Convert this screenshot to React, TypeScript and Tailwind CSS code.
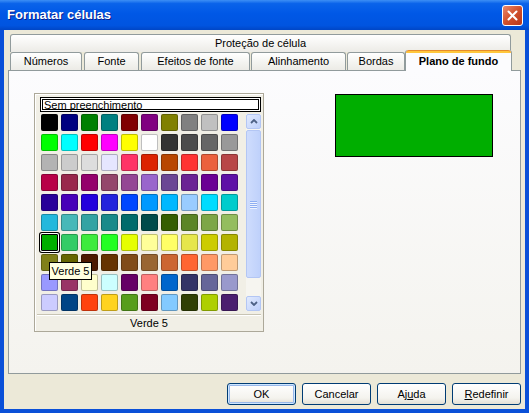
import React from 'react';

// Paleta padrão (10 x 10)
const palette: string[][] = [
  ['#000000', '#000080', '#008000', '#008080', '#800000', '#800080', '#808000', '#808080', '#c0c0c0', '#0000ff'],
  ['#00ff00', '#00ffff', '#ff0000', '#ff00ff', '#ffff00', '#ffffff', '#333333', '#4c4c4c', '#666666', '#999999'],
  ['#b3b3b3', '#cccccc', '#dddddd', '#e6e6ff', '#ff3366', '#dc2300', '#b84700', '#ff3333', '#eb613d', '#b84747'],
  ['#b80047', '#99284c', '#94006b', '#94476b', '#944794', '#9966cc', '#6b4794', '#6b2394', '#6b0094', '#5e11a6'],
  ['#280099', '#4700b8', '#2300dc', '#2323dc', '#0047ff', '#0099ff', '#00b8ff', '#99ccff', '#00dcff', '#00cccc'],
  ['#23b8dc', '#47b8b8', '#33a3a3', '#198a8a', '#006b6b', '#004a4a', '#355e00', '#5c8526', '#7da647', '#94bd5e'],
  ['#00ae00', '#33cc66', '#3deb3d', '#23ff23', '#e6ff00', '#ffff99', '#ffff66', '#e6e64c', '#cccc00', '#b3b300'],
  ['#808019', '#666600', '#4c1900', '#663300', '#804c19', '#996633', '#cc6633', '#ff6633', '#ff9966', '#ffcc99'],
  ['#9999ff', '#993366', '#ffffcc', '#ccffff', '#660066', '#ff8080', '#0066cc', '#333366', '#666699', '#9999cc'],
  ['#ccccff', '#004586', '#ff420e', '#ffd320', '#579d1c', '#7e0021', '#83caff', '#314004', '#aecf00', '#4b1f6f'],
];

const tabs = [
  { label: 'Números', cls: 'w-[72px]' },
  { label: 'Fonte', cls: 'w-[55px] ml-[2px]' },
  { label: 'Efeitos de fonte', cls: 'w-[109px] ml-[2px]' },
  { label: 'Alinhamento', cls: 'w-[95px] ml-[1px]' },
  { label: 'Bordas', cls: 'w-[58px] ml-[1px]' },
];

const tabBase =
  'flex h-[18px] items-center justify-center rounded-t-[3px] border-x border-t border-[#919b9c] bg-[linear-gradient(to_bottom,#ffffff,#f3f3ef_60%,#ecebe6)]';

function Chevron({ down }: { down?: boolean }) {
  return (
    <svg width="8" height="5" viewBox="0 0 8 5">
      <polyline
        points={down ? '1,1 4,4 7,1' : '1,4 4,1 7,4'}
        fill="none"
        stroke="#4d6185"
        strokeWidth="1.8"
      />
    </svg>
  );
}

function ScrollButton({ down }: { down?: boolean }) {
  return (
    <div className="flex h-[15px] w-[15px] items-center justify-center rounded-[2px] border border-[#b3c6f4] bg-[linear-gradient(to_bottom_right,#e1eafe,#bed0fb)]">
      <Chevron down={down} />
    </div>
  );
}

function ScrollBar() {
  return (
    <div className="ml-[8px] flex h-[197px] w-[15px] flex-col bg-[#f6f5f0]">
      <ScrollButton />
      <div className="mt-px flex h-[148px] flex-col items-center justify-center gap-[1px] rounded-[2px] border border-[#b3c6f4] bg-[linear-gradient(to_right,#cedcfd,#bfd1fb)]">
        {[0, 1, 2, 3].map((i) => (
          <div key={i} className="h-px w-[7px] bg-[#8eaef2] shadow-[0_1px_0_#eef3fe]" />
        ))}
      </div>
      <div className="flex-1" />
      <ScrollButton down />
    </div>
  );
}

function ColorFrame() {
  return (
    <div className="relative flex h-[239px] w-[230px] flex-col border border-[#aca899] bg-[#f1efe6] pt-[3px] shadow-[inset_1px_1px_0_#ffffff]">
      <div className="ml-[5px] h-[15px] w-[221px] border border-black bg-white p-px">
        <div className="h-full border border-black bg-white pl-[1px] text-[11px] leading-[10px] text-black">
          Sem preenchimento
        </div>
      </div>

      <div className="mt-[2px] flex pl-[6px]">
        <div className="grid h-[197px] w-[197px] grid-cols-10 gap-[3px]">
          {palette.flat().map((c, i) => (
            <div
              key={i}
              className={
                i === 60
                  ? 'h-[17px] w-[17px] rounded-[1px] border border-black shadow-[0_0_0_1px_#ffffff,0_0_0_2px_#000000]'
                  : 'h-[17px] w-[17px] rounded-[2px] border border-black/25'
              }
              style={{ backgroundColor: c }}
            />
          ))}
        </div>
        <ScrollBar />
      </div>

      <div className="mx-[2px] mt-[3px] h-[2px] border-t border-[#c8c4b4] border-b border-b-white" />
      <div className="flex h-[15px] items-center justify-center text-[11px] text-black">Verde 5</div>

      <div className="absolute left-[14px] top-[168px] flex h-[18px] w-[43px] items-center justify-center border border-black bg-[#ffffe1] text-[11px] text-black">
        Verde 5
      </div>
    </div>
  );
}

function XPButton({ children, isDefault }: { children: React.ReactNode; isDefault?: boolean }) {
  return (
    <button
      className={
        'flex h-[22px] w-[69px] items-center justify-center rounded-[3px] border border-[#003c74] bg-[linear-gradient(to_bottom,#ffffff,#f4f3ee_70%,#e3e0d5)] text-[11px] text-black ' +
        (isDefault ? 'shadow-[inset_0_0_0_1px_#cee7ff,inset_0_0_0_2px_#98b8ea]' : '')
      }
    >
      {children}
    </button>
  );
}

export default function App() {
  return (
    <div className="flex h-[413px] w-[529px] flex-col bg-[#0a50d8] font-['Liberation_Sans',Arial,sans-serif]">
      {/* barra de título */}
      <div className="flex h-[30px] shrink-0 items-center justify-between bg-[linear-gradient(to_bottom,#3d8ff5_0%,#0a63ea_12%,#0058e6_45%,#0054e0_85%,#0046c6_100%)] pl-[7px] pr-[6px]">
        <span className="text-[13px] font-bold text-white [text-shadow:1px_1px_0_#0a1e8c]">Formatar células</span>
        <div className="flex h-[21px] w-[21px] items-center justify-center rounded-[3px] border border-white bg-[linear-gradient(to_bottom_right,#e98a6e,#d1502c_50%,#b8361a)]">
          <svg width="11" height="11" viewBox="0 0 11 11">
            <path d="M1.5 1.5 L9.5 9.5 M9.5 1.5 L1.5 9.5" stroke="#ffffff" strokeWidth="2" strokeLinecap="round" />
          </svg>
        </div>
      </div>

      {/* corpo */}
      <div className="mx-[4px] mb-[4px] flex flex-1 flex-col bg-[#ece9d8] px-[4px] pt-[4px] text-[11px] text-black">
        <div className="ml-[2px] flex h-[18px] w-[501px] items-center justify-center rounded-t-[3px] border-x border-t border-[#919b9c] bg-[linear-gradient(to_bottom,#ffffff,#ecebe6)] pb-[1px]">
          Proteção de célula
        </div>

        <div className="ml-[2px] flex h-[18px] items-end">
          {tabs.map((t) => (
            <div key={t.label} className={tabBase + ' ' + t.cls}>
              {t.label}
            </div>
          ))}
          <div className="relative z-10 mb-[-1px] flex h-[21px] w-[107px] flex-col rounded-t-[3px] border-x border-[#919b9c] bg-[#fcfcfe]">
            <div className="h-[3px] rounded-t-[3px] border-t border-[#e68b2c] bg-[#ffc73c]" />
            <div className="flex flex-1 items-center justify-center pb-[1px] font-bold">Plano de fundo</div>
          </div>
        </div>

        {/* painel da guia */}
        <div className="flex h-[304px] items-start border border-[#919b9c] bg-[linear-gradient(to_bottom,#fcfcfe,#f4f3ee)] pl-[25px] pt-[22px]">
          <ColorFrame />
          <div className="ml-[71px] mt-px h-[63px] w-[158px] border border-black bg-[#00ae00]" />
        </div>

        <div className="mt-[9px] flex justify-end gap-[6px]">
          <XPButton isDefault>OK</XPButton>
          <XPButton>Cancelar</XPButton>
          <XPButton>
            Aj<span className="underline">u</span>da
          </XPButton>
          <XPButton>
            <span className="underline">R</span>edefinir
          </XPButton>
        </div>
      </div>
    </div>
  );
}
